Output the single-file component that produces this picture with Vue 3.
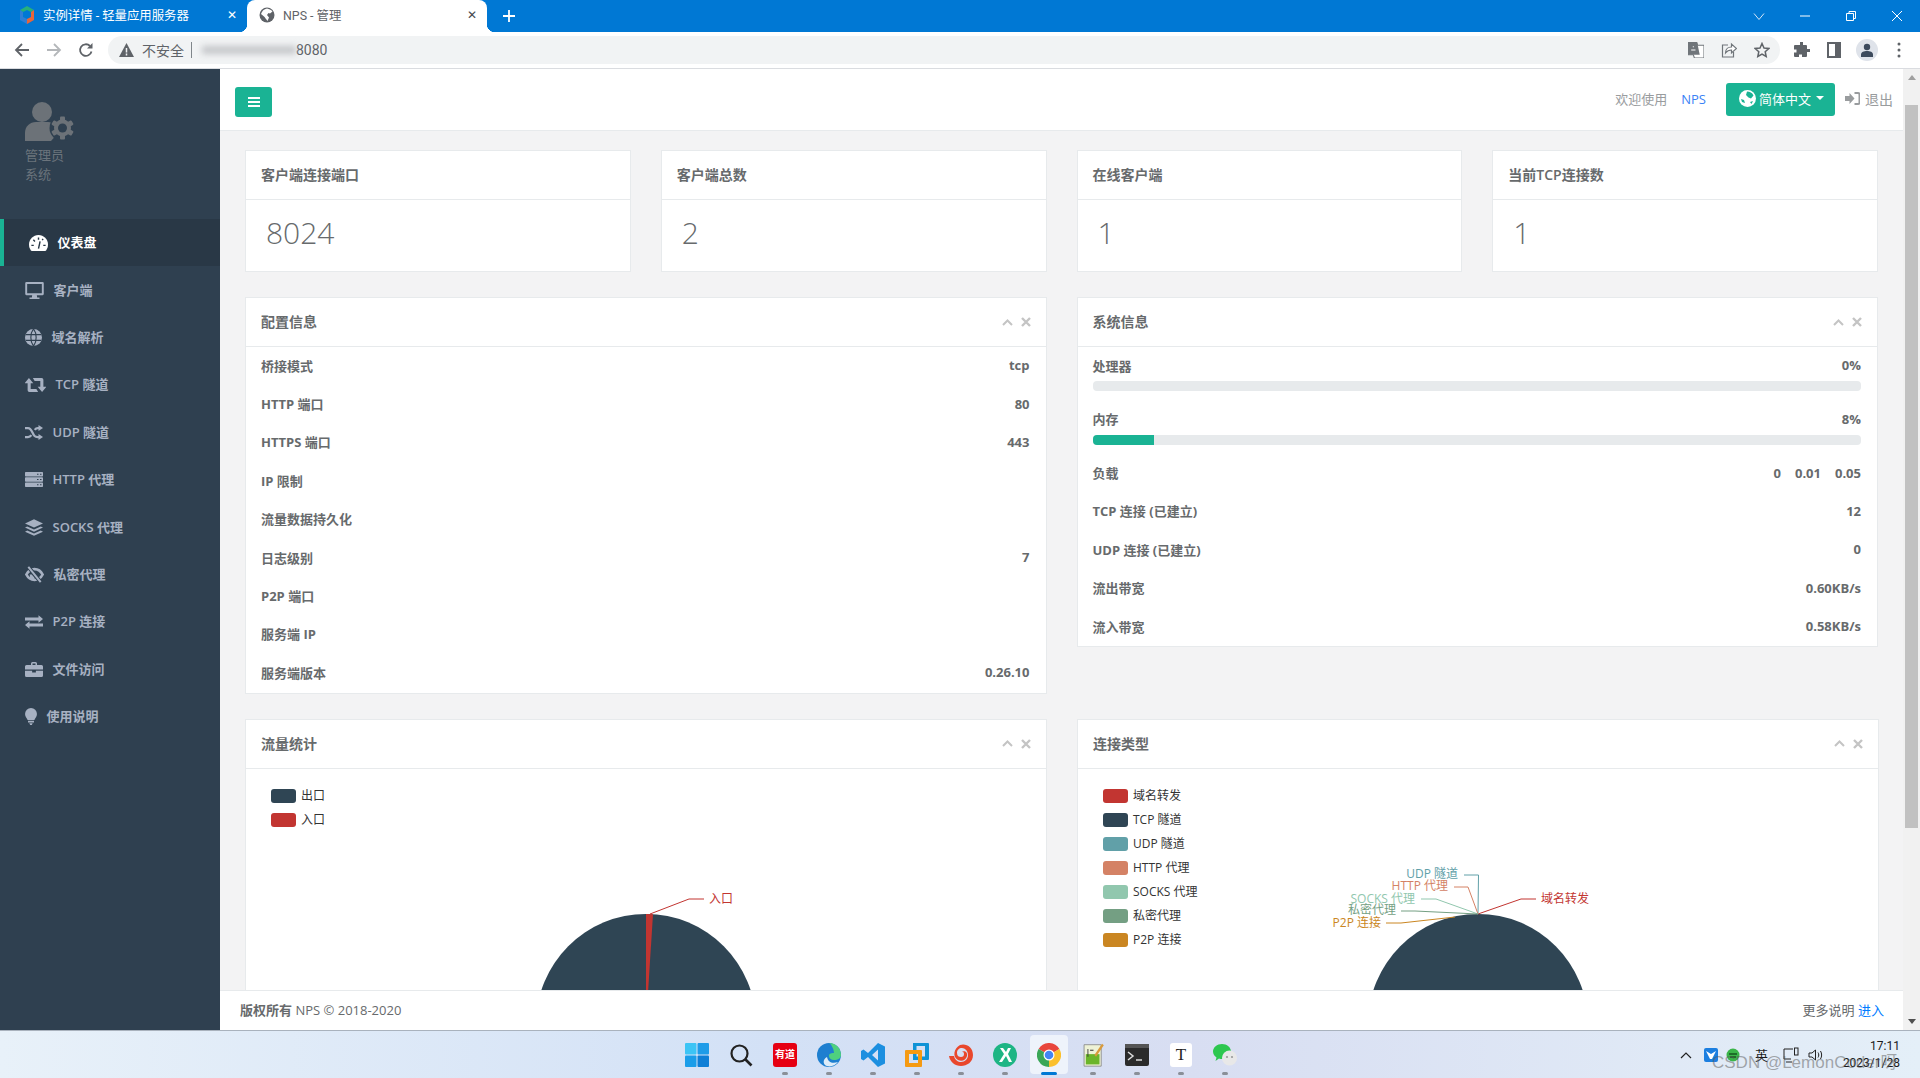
<template>
  <div class="screen">
    <!-- browser tabs -->
    <div class="tabstrip">
      <div class="tab">
        <svg class="fav" width="16" height="18" viewBox="0 0 16 18">
          <path d="M8 0l7 4-3 2-4-2-4 2-3-2z" fill="#27b07c" />
          <path d="M1 4l3 2v5l4 2v5l-7-4z" fill="#2f7fd6" />
          <path d="M15 4l-3 2v5l-4 2v5l7-4z" fill="#e8663a" />
        </svg>
        <span class="tab-title">实例详情 - 轻量应用服务器</span>
        <span class="tab-x">✕</span>
      </div>
      <div class="tab active">
        <svg class="fav" width="16" height="16" viewBox="0 0 16 16">
          <circle cx="8" cy="8" r="7.5" fill="#5f6368" />
          <path d="M8 1.5c2 .5 4 1 5.5 3L11 6.5 9.5 6 8 8l2 2.5L8.5 14C7 12 6 10.5 5 9.5L2 7c1-3 3-5 6-5.5z" fill="#fff" />
        </svg>
        <span class="tab-title">NPS - 管理</span>
        <span class="tab-x">✕</span>
      </div>
      <svg class="newtab" width="14" height="14" viewBox="0 0 14 14"><path d="M7 1v12M1 7h12" stroke="#fff" stroke-width="1.8" /></svg>
      <div class="winctl">
        <svg width="12" height="12" viewBox="0 0 12 12"><path d="M1 3.5l5 6 5-6" fill="none" stroke="#d5e6f7" /></svg>
        <svg width="12" height="12" viewBox="0 0 12 12"><path d="M1 6h10" stroke="#fff" /></svg>
        <svg width="12" height="12" viewBox="0 0 12 12"><path d="M1.5 3.5h7v7h-7zM4 3.5V1.5h6.5v7H8.5" fill="none" stroke="#fff" /></svg>
        <svg width="12" height="12" viewBox="0 0 12 12"><path d="M1 1l10 10M11 1L1 11" stroke="#fff" /></svg>
      </div>
    </div>

    <!-- address bar -->
    <div class="toolbar">
      <svg class="tb back" width="16" height="16" viewBox="0 0 16 16"><path d="M15 8H2M8 2L2 8l6 6" fill="none" stroke="#5f6368" stroke-width="1.8" /></svg>
      <svg class="tb fwd" width="16" height="16" viewBox="0 0 16 16"><path d="M1 8h13M8 2l6 6-6 6" fill="none" stroke="#b4b7ba" stroke-width="1.8" /></svg>
      <svg class="tb reload" width="16" height="16" viewBox="0 0 16 16">
        <path d="M13.5 9.5A5.8 5.8 0 1 1 12 4" fill="none" stroke="#5f6368" stroke-width="1.8" />
        <path d="M14.5 1v5.5H9z" fill="#5f6368" />
      </svg>
      <div class="omnibox">
        <svg width="15" height="14" viewBox="0 0 15 14"><path d="M7.5 0L15 14H0z" fill="#5f6368" /><path d="M7.5 5v4.5M7.5 10.5v2" stroke="#f1f3f4" stroke-width="1.5" /></svg>
        <span class="insecure">不安全</span>
        <i class="omni-div"></i>
        <span class="blurred"></span>
        <span class="port">8080</span>
        <div class="omni-right">
          <svg width="16" height="16" viewBox="0 0 15 15">
            <path d="M0 0h8l1 3H15v12H6l-1-3H0z" fill="#fff" stroke="#70757a" />
            <path d="M0 0h8.5l2.5 12H0z" fill="#70757a" />
            <path d="M3 7.5h4M5 4v1" stroke="#fff" fill="none" />
          </svg>
          <svg width="16" height="16" viewBox="0 0 16 16">
            <path d="M7 3H1.5v12h11V10" fill="none" stroke="#70757a" stroke-width="1.2" />
            <path d="M4.5 11c0-4 3-6 6-6V2l5 4.5-5 4.5V8c-3 0-4.500 1-6 3z" fill="#fff" stroke="#70757a" stroke-width="1.2" />
          </svg>
          <svg width="16" height="16" viewBox="0 0 16 16"><path d="M8 1.5l2 4.5 4.8.5-3.600 3.200 1 4.800L8 12.100l-4.200 2.400 1-4.800L1.200 6.500 6 6z" fill="none" stroke="#5f6368" stroke-width="1.5" /></svg>
        </div>
      </div>
      <div class="tool-right">
        <svg width="16" height="16" viewBox="0 0 16 16"><path d="M6 0h3v3h3a1 1 0 0 1 1 1v3h3v3h-3v4a1 1 0 0 1-1 1H8v-2.5H5V15H1a1 1 0 0 1-1-1v-3.500h2.500v-3H0V4a1 1 0 0 1 1-1h5z" fill="#5f6368" /></svg>
        <svg width="14" height="16" viewBox="0 0 14 16"><path fill-rule="evenodd" d="M0 0h14v16H0zM2 2v12h6V2z" fill="#5f6368" /></svg>
        <span class="avatar">
          <svg width="14" height="14" viewBox="0 0 14 14"><circle cx="7" cy="4" r="3.2" fill="#3c4a5c" /><path d="M1 14v-2.500C1 9 4 8 7 8s6 1 6 3.500V14z" fill="#3c4a5c" /></svg>
        </span>
        <svg width="4" height="16" viewBox="0 0 4 16"><circle cx="2" cy="2" r="1.500" fill="#5f6368" /><circle cx="2" cy="8" r="1.500" fill="#5f6368" /><circle cx="2" cy="14" r="1.500" fill="#5f6368" /></svg>
      </div>
    </div>

    <div class="page">
      <!-- sidebar -->
      <aside class="sidebar">
        <div class="profile">
          <svg class="profile-ico" width="49" height="39" viewBox="0 0 49 39">
            <circle cx="17" cy="10" r="10" fill="#6c7278" />
            <path d="M0 39v-8c0-7 5-11 11-11h12c5 0 10 4 11 10l-8 9z" fill="#6c7278" />
            <circle cx="37.5" cy="26" r="13" fill="#2f4050" />
            <g fill="#6c7278">
              <rect x="35" y="14.5" width="5" height="23" rx="1" />
              <rect x="35" y="14.5" width="5" height="23" rx="1" transform="rotate(60 37.5 26)" />
              <rect x="35" y="14.5" width="5" height="23" rx="1" transform="rotate(120 37.5 26)" />
            </g>
            <circle cx="37.5" cy="26" r="8.5" fill="#6c7278" />
            <circle cx="37.5" cy="26" r="4.5" fill="#2f4050" />
          </svg>
          <div class="profile-line">管理员</div>
          <div class="profile-line">系统</div>
        </div>
        <nav>
          <a v-for="item in navItems" :key="item.label" class="nav-item" :class="{ on: item.active }">
            <svg :width="item.w" :height="item.h" :viewBox="item.vb">
              <path
                v-for="(p, i) in item.paths"
                :key="i"
                :d="p.d"
                :fill="p.stroke ? 'none' : 'currentColor'"
                :stroke="p.stroke === 'cut' ? navCut(item) : p.stroke ? 'currentColor' : 'none'"
                :stroke-width="p.sw"
                fill-rule="evenodd"
              />
            </svg>
            <span>{{ item.label }}</span>
          </a>
        </nav>
      </aside>

      <div class="main">
        <header class="topbar">
          <button class="burger">
            <svg width="12" height="12" viewBox="0 0 12 12"><path d="M0 1h12v2H0zM0 5h12v2H0zM0 9h12v2H0z" fill="#fff" /></svg>
          </button>
          <span class="welcome">欢迎使用</span>
          <a class="nps">NPS</a>
          <button class="lang">
            <svg width="17" height="17" viewBox="0 0 17 17">
              <circle cx="8.5" cy="8.5" r="8.5" fill="#fff" />
              <path d="M8 1.5c3 0 5 1 6.5 4L12 8.5l-2.5-1L7 5zM11 12l3-1-1.5 3zM2 9l3 1 1 3-3-1z" fill="#1ab394" />
            </svg>
            <span>简体中文</span>
            <i class="caret"></i>
          </button>
          <a class="logout">
            <svg width="15" height="13" viewBox="0 0 15 13">
              <path d="M0 4h4.500V1l5 5.500-5 5.500V9H0z" fill="#999c9e" />
              <path d="M9.5 1H13a1.500 1.500 0 0 1 1.500 1.500v8A1.500 1.500 0 0 1 13 12H9.5" fill="none" stroke="#999c9e" stroke-width="2" />
            </svg>
            <span>退出</span>
          </a>
        </header>

        <div class="content">
          <div class="stats">
            <section v-for="s in stats" :key="s.title" class="box">
              <div class="box-head"><h5>{{ s.title }}</h5></div>
              <div class="stat-value">{{ s.value }}</div>
            </section>
          </div>

          <div class="cols">
            <section class="box">
              <div class="box-head">
                <h5>配置信息</h5>
                <div class="box-tools">
                  <svg width="11" height="7" viewBox="0 0 11 7"><path d="M1 6l4.500-4.500L10 6" fill="none" stroke="#c4c4c4" stroke-width="2" /></svg>
                  <svg width="10" height="10" viewBox="0 0 10 10"><path d="M1 1l8 8M9 1L1 9" stroke="#c4c4c4" stroke-width="2.4" /></svg>
                </div>
              </div>
              <div v-for="r in configRows" :key="r[0]" class="row">
                <span>{{ r[0] }}</span><span>{{ r[1] }}</span>
              </div>
            </section>

            <section class="box">
              <div class="box-head">
                <h5>系统信息</h5>
                <div class="box-tools">
                  <svg width="11" height="7" viewBox="0 0 11 7"><path d="M1 6l4.500-4.500L10 6" fill="none" stroke="#c4c4c4" stroke-width="2" /></svg>
                  <svg width="10" height="10" viewBox="0 0 10 10"><path d="M1 1l8 8M9 1L1 9" stroke="#c4c4c4" stroke-width="2.4" /></svg>
                </div>
              </div>
              <div v-for="b in sysBars" :key="b.label" class="bar-row">
                <div class="row"><span>{{ b.label }}</span><span>{{ b.pct }}%</span></div>
                <div class="track"><div class="fill" :style="{ width: b.pct + '%' }"></div></div>
              </div>
              <div class="row">
                <span>负载</span>
                <span class="load"><span>0</span><span>0.01</span><span>0.05</span></span>
              </div>
              <div v-for="r in sysRows" :key="r[0]" class="row">
                <span>{{ r[0] }}</span><span>{{ r[1] }}</span>
              </div>
            </section>
          </div>

          <div class="cols">
            <section v-for="c in charts" :key="c.title" class="box">
              <div class="box-head">
                <h5>{{ c.title }}</h5>
                <div class="box-tools">
                  <svg width="11" height="7" viewBox="0 0 11 7"><path d="M1 6l4.500-4.500L10 6" fill="none" stroke="#c4c4c4" stroke-width="2" /></svg>
                  <svg width="10" height="10" viewBox="0 0 10 10"><path d="M1 1l8 8M9 1L1 9" stroke="#c4c4c4" stroke-width="2.4" /></svg>
                </div>
              </div>
              <svg class="chart" width="800" height="400" viewBox="0 0 800 400">
                <g v-for="(l, i) in c.legend" :key="l.name">
                  <rect x="25" :y="20 + i * 24" width="25" height="14" rx="3" :fill="l.color" />
                  <text x="55" :y="31 + i * 24" class="legend-txt">{{ l.name }}</text>
                </g>
                <circle cx="400" cy="255" r="110" fill="#2f4554" />
                <path v-if="c.slice" d="M400 255V145A110 110 0 0 1 407 145.2z" fill="#c23531" />
                <g v-for="l in c.labels" :key="l.name">
                  <polyline :points="l.line" fill="none" :stroke="l.color" />
                  <text :x="l.x" :y="l.y" :text-anchor="l.anchor" :fill="l.color" class="pie-txt">{{ l.name }}</text>
                </g>
              </svg>
            </section>
          </div>
        </div>

        <footer class="footer">
          <div><strong>版权所有</strong> NPS © 2018-2020</div>
          <div>更多说明 <a>进入</a></div>
        </footer>
      </div>

      <div class="scrollbar">
        <i class="sb-up"></i>
        <div class="sb-thumb"></div>
        <i class="sb-down"></i>
      </div>
    </div>

    <!-- windows taskbar -->
    <div class="taskbar">
      <div class="task-icons">
        <span class="task-ico">
          <svg width="24" height="24" viewBox="0 0 24 24">
            <rect x="0" y="0" width="11.5" height="11.5" rx="1" fill="#3cc4f5" />
            <rect x="12.5" y="0" width="11.5" height="11.5" rx="1" fill="#1f9ce8" />
            <rect x="0" y="12.5" width="11.5" height="11.5" rx="1" fill="#1a9de9" />
            <rect x="12.5" y="12.5" width="11.5" height="11.5" rx="1" fill="#0f7fd6" />
          </svg>
        </span>
        <span class="task-ico">
          <svg width="24" height="24" viewBox="0 0 24 24"><circle cx="10.5" cy="10.5" r="8" fill="none" stroke="#222" stroke-width="2.2" /><path d="M16 16l6.500 6.500" stroke="#222" stroke-width="2.6" /></svg>
        </span>
        <span class="task-ico dot">
          <span class="youdao">有道</span>
        </span>
        <span class="task-ico dot">
          <svg width="24" height="24" viewBox="0 0 24 24">
            <circle cx="12" cy="12" r="12" fill="#1e7fd0" />
            <path d="M12 0c7 0 12 5 12 12 0 3-3 5-7 5-3 0-5-2-5-4 0-3 3-3 5-3 0-5-4-10-5-10z" fill="#4fd07e" />
            <path d="M10 14c1 5 5 7 11 5-3 4-9 6-13 3-2-2-2-6 2-8z" fill="#fff" opacity=".85" />
          </svg>
        </span>
        <span class="task-ico dot">
          <svg width="24" height="24" viewBox="0 0 24 24">
            <path d="M17 0l7 3.500v17L17 24 7 14l-4.500 3.500L0 16V8l2.500-1.500L7 10zM17 6.500L11 12l6 5.500z" fill="#1c8fe0" fill-rule="evenodd" />
          </svg>
        </span>
        <span class="task-ico dot">
          <svg width="24" height="24" viewBox="0 0 24 24">
            <path d="M8 0h15a1 1 0 0 1 1 1v15a1 1 0 0 1-1 1H8zm3.500 3v10.500H20V3z" fill="#0f93d6" fill-rule="evenodd" />
            <path d="M1 7h15a1 1 0 0 1 1 1v15a1 1 0 0 1-1 1H1a1 1 0 0 1-1-1V8a1 1 0 0 1 1-1zm3 4v9h9v-9z" fill="#f59a12" fill-rule="evenodd" />
          </svg>
        </span>
        <span class="task-ico dot">
          <svg width="24" height="24" viewBox="0 0 24 24">
            <path d="M0 13h5c1 4 4 6 7 6 4 0 7-3 7-7s-3-7-6-7-5 2-5 5 2 4 4 4 3-1 3-3-1-2-2-2c2-2 6 0 5 4s-5 6-9 4C3 14 5 5 11 2c6-2 13 2 13 10 0 7-6 11-12 11C6 23 1 19 0 13z" fill="#e9472c" />
          </svg>
        </span>
        <span class="task-ico dot">
          <svg width="24" height="24" viewBox="0 0 24 24">
            <circle cx="12" cy="12" r="12" fill="#1db584" />
            <path d="M7 5l4 6-5 8h3l4-6 3 6h3l-4-8 3-6h-3l-2 4-3-4z" fill="#fff" />
          </svg>
        </span>
        <span class="task-ico chrome">
          <svg width="24" height="24" viewBox="0 0 24 24">
            <path d="M12 12L1.600 6A12 12 0 0 1 22.400 6z" fill="#e8453c" />
            <path d="M12 12l10.400-6A12 12 0 0 1 12 24z" fill="#fbc02d" />
            <path d="M12 12L12 24A12 12 0 0 1 1.600 6z" fill="#3aa757" />
            <circle cx="12" cy="12" r="5.5" fill="#fff" /><circle cx="12" cy="12" r="4.3" fill="#4285f4" />
          </svg>
        </span>
        <span class="task-ico dot">
          <svg width="21" height="24" viewBox="0 0 24 28">
            <path d="M1 2h20v25H1z" fill="#eef2d6" stroke="#888" />
            <path d="M3 13h16v12H3z" fill="#6bb52a" />
            <path d="M5 7h1v9H5zM8 8h4v1H8z" fill="#333" />
            <path d="M13 14L22 1l2 1.500L15 16z" fill="#d99a3c" />
          </svg>
        </span>
        <span class="task-ico dot">
          <svg width="24" height="22" viewBox="0 0 24 22">
            <rect width="24" height="22" rx="2" fill="#2b2b2b" /><rect width="24" height="4" fill="#555" />
            <path d="M3 8l5 4-5 4" fill="none" stroke="#ddd" stroke-width="1.5" /><path d="M11 16h6" stroke="#ddd" stroke-width="1.5" />
          </svg>
        </span>
        <span class="task-ico dot"><span class="t-ico">T</span></span>
        <span class="task-ico dot">
          <svg width="24" height="22" viewBox="0 0 24 22">
            <path d="M9 0c5 0 9 3.500 9 7.500S14 15 9 15c-1 0-2 0-3-.5L2.500 17l1-3.500C1.500 12 0 10 0 7.500 0 3.500 4 0 9 0z" fill="#2dc74f" />
            <circle cx="16.5" cy="14" r="7.5" fill="#e8e8e8" />
            <circle cx="14" cy="13" r="1.1" fill="#999" /><circle cx="19" cy="13" r="1.1" fill="#999" />
          </svg>
        </span>
      </div>
      <div class="tray">
        <svg class="tray-chev" width="12" height="8" viewBox="0 0 12 8"><path d="M1 7l5-5 5 5" fill="none" stroke="#222" stroke-width="1.2" /></svg>
        <svg class="tray-a" width="14" height="14" viewBox="0 0 14 14"><rect width="14" height="14" rx="2" fill="#1c7fe0" /><path d="M2 3l5 3 5-3-4 8H6z" fill="#fff" /></svg>
        <svg class="tray-b" width="14" height="14" viewBox="0 0 14 14"><circle cx="7" cy="7" r="6.5" fill="#3bb54a" /><path d="M3 6h8M4 9h6" stroke="#14571f" stroke-width="1.3" /></svg>
        <span class="tray-ime">英</span>
        <svg class="tray-c" width="16" height="16" viewBox="0 0 16 16"><path d="M8 12H1V2h9M3 15h6" fill="none" stroke="#222" /><rect x="11.5" y="1" width="3.5" height="7" fill="none" stroke="#222" /></svg>
        <svg class="tray-d" width="16" height="16" viewBox="0 0 16 16"><path d="M1 6h3l3.500-3v10L4 10H1z" fill="none" stroke="#222" /><path d="M10 5.500c1 1.500 1 3.500 0 5M12.500 4c1.500 2.500 1.500 5.500 0 8" fill="none" stroke="#222" /></svg>
        <div class="clock"><div>17:11</div><div>2023/1/28</div></div>
      </div>
      <span class="watermark">CSDN @LemonCoder呀</span>
    </div>
  </div>
</template>

<script setup>
const navItems = [
  {
    label: "仪表盘", active: true, w: 19, h: 16, vb: "0 0 24 20",
    paths: [
      { d: "M12 0C5.400 0 0 5.400 0 12c0 2.800.9 5.400 2.400 7.400.3.400.7.600 1.200.600h16.800c.5 0 .9-.2 1.200-.6C23.100 17.400 24 14.800 24 12c0-6.600-5.400-12-12-12z" },
      { d: "M12 3v3M5.500 6l2 2M3 13h3M18 13h3M12 17l2-9M16.500 6l1.500-1", stroke: "cut", sw: 1.8 },
    ],
  },
  {
    label: "客户端", w: 19, h: 17, vb: "0 0 24 22",
    paths: [{ d: "M1.500 0h21A1.500 1.500 0 0 1 24 1.500v14a1.500 1.500 0 0 1-1.500 1.500H15l.5 3h3v2h-13v-2h3l.5-3H1.500A1.500 1.500 0 0 1 0 15.500v-14A1.500 1.500 0 0 1 1.500 0zM2.500 2.500v12h19v-12z" }],
  },
  {
    label: "域名解析", w: 17, h: 17, vb: "0 0 24 24",
    paths: [
      { d: "M12 0a12 12 0 1 0 0 24a12 12 0 1 0 0-24z" },
      { d: "M1 8h22M1 16h22M12 0c-5 6-5 18 0 24M12 0c5 6 5 18 0 24", stroke: "cut", sw: 1.6 },
    ],
  },
  {
    label: "TCP 隧道", w: 21, h: 14, vb: "0 0 24 16",
    paths: [
      { d: "M4.500 0L9.500 6H6.500v6.500H13L15 16H5a2 2 0 0 1-2-2V6H-.5z" },
      { d: "M19.500 16L14.500 10h3V3.500H11L9 0h10a2 2 0 0 1 2 2v8h3.500z" },
    ],
  },
  {
    label: "UDP 隧道", w: 18, h: 15, vb: "0 0 24 20",
    paths: [
      { d: "M0 4h4c3 0 4 1.500 6 6s3 6 7 6h2M0 16h4c2 0 3.500-1 4.500-2.500M13 6.500C14 5 15 4 17 4h2", stroke: "line", sw: 3 },
      { d: "M18 0l6 4-6 4z" },
      { d: "M18 12l6 4-6 4z" },
    ],
  },
  {
    label: "HTTP 代理", w: 18, h: 15, vb: "0 0 24 20",
    paths: [
      { d: "M1 0h22a1 1 0 0 1 1 1v4a1 1 0 0 1-1 1H1a1 1 0 0 1-1-1V1a1 1 0 0 1 1-1zM1 7h22a1 1 0 0 1 1 1v4a1 1 0 0 1-1 1H1a1 1 0 0 1-1-1V8a1 1 0 0 1 1-1zM1 14h22a1 1 0 0 1 1 1v4a1 1 0 0 1-1 1H1a1 1 0 0 1-1-1v-4a1 1 0 0 1 1-1z" },
      { d: "M16 3h2M20 3h2M16 10h2M20 10h2M16 17h2M20 17h2", stroke: "cut", sw: 1.4 },
    ],
  },
  {
    label: "SOCKS 代理", w: 18, h: 17, vb: "0 0 24 22",
    paths: [
      { d: "M12 0l12 5.500L12 11 0 5.500z" },
      { d: "M3 9.500l9 4 9-4 3 1.500-12 5.500L0 11z" },
      { d: "M3 15l9 4 9-4 3 1.500L12 22 0 16.500z" },
    ],
  },
  {
    label: "私密代理", w: 19, h: 17, vb: "0 0 24 22",
    paths: [
      { d: "M1.500 11C4 6 8 4 12 4s8 2 10.500 7c-2.500 5-6.500 7-10.500 7s-8-2-10.500-7zM7.500 11c0 3 2 4.500 4.500 4.500", stroke: "line", sw: 3.4 },
      { d: "M4 1l16 20", stroke: "cut", sw: 5 },
      { d: "M4 1l16 20", stroke: "line", sw: 2.6 },
    ],
  },
  {
    label: "P2P 连接", w: 18, h: 14, vb: "0 0 24 18",
    paths: [
      { d: "M18 0l6 5-6 5V7H0V3h18z" },
      { d: "M6 8l-6 5 6 5v-3h18v-4H6z" },
    ],
  },
  {
    label: "文件访问", w: 18, h: 15, vb: "0 0 24 20",
    paths: [
      { d: "M8 4V2a2 2 0 0 1 2-2h4a2 2 0 0 1 2 2v2h6a2 2 0 0 1 2 2v4H0V6a2 2 0 0 1 2-2zm2 0h4V2h-4z" },
      { d: "M0 11.500h9.500V14h5v-2.500H24V18a2 2 0 0 1-2 2H2a2 2 0 0 1-2-2z" },
    ],
  },
  {
    label: "使用说明", w: 12, h: 17, vb: "0 0 14 20",
    paths: [{ d: "M7 0a7 7 0 0 1 7 7c0 3-2 4.500-3 7H3C2 11.500 0 10 0 7a7 7 0 0 1 7-7zM3.500 15h7v2h-7zM5 18h4l-1 2H6z" }],
  },
];

// cut-out lines take the colour of the row behind the icon
function navCut(item) {
  return item.active ? "#293846" : "#2f4050";
}

const stats = [
  { title: "客户端连接端口", value: "8024" },
  { title: "客户端总数", value: "2" },
  { title: "在线客户端", value: "1" },
  { title: "当前TCP连接数", value: "1" },
];

const configRows = [
  ["桥接模式", "tcp"],
  ["HTTP 端口", "80"],
  ["HTTPS 端口", "443"],
  ["IP 限制", ""],
  ["流量数据持久化", ""],
  ["日志级别", "7"],
  ["P2P 端口", ""],
  ["服务端 IP", ""],
  ["服务端版本", "0.26.10"],
];

const sysBars = [
  { label: "处理器", pct: 0 },
  { label: "内存", pct: 8 },
];

const sysRows = [
  ["TCP 连接 (已建立)", "12"],
  ["UDP 连接 (已建立)", "0"],
  ["流出带宽", "0.60KB/s"],
  ["流入带宽", "0.58KB/s"],
];

const charts = [
  {
    title: "流量统计",
    slice: true,
    legend: [
      { name: "出口", color: "#2f4554" },
      { name: "入口", color: "#c23531" },
    ],
    labels: [
      { name: "入口", color: "#c23531", line: "404,145 443,130 458,130", x: 463, y: 134, anchor: "start" },
    ],
  },
  {
    title: "连接类型",
    legend: [
      { name: "域名转发", color: "#c23531" },
      { name: "TCP 隧道", color: "#2f4554" },
      { name: "UDP 隧道", color: "#61a0a8" },
      { name: "HTTP 代理", color: "#d48265" },
      { name: "SOCKS 代理", color: "#91c7ae" },
      { name: "私密代理", color: "#749f83" },
      { name: "P2P 连接", color: "#ca8622" },
    ],
    labels: [
      { name: "域名转发", color: "#c23531", line: "400,145 443,130 458,130", x: 463, y: 134, anchor: "start" },
      { name: "UDP 隧道", color: "#61a0a8", line: "400,145 400.5,106 386,106", x: 380, y: 109, anchor: "end" },
      { name: "HTTP 代理", color: "#d48265", line: "400,145 390,118 376,118", x: 370, y: 121, anchor: "end" },
      { name: "SOCKS 代理", color: "#91c7ae", line: "400,145 358,130 343,130", x: 337, y: 134, anchor: "end" },
      { name: "私密代理", color: "#749f83", line: "400,145 337,142 323,142", x: 318, y: 145, anchor: "end" },
      { name: "P2P 连接", color: "#ca8622", line: "377,148 323,154 308,154", x: 303, y: 158, anchor: "end" },
    ],
  },
];
</script>

<style>
html,
body {
  margin: 0;
  overflow: hidden;
}
</style>

<style scoped>
* {
  box-sizing: border-box;
}

.screen {
  width: 1920px;
  height: 1078px;
  display: flex;
  flex-direction: column;
  overflow: hidden;
  position: relative;
  font-family: "Open Sans", "Noto Sans CJK SC", sans-serif;
  font-size: 13px;
  color: #676a6c;
}

.tabstrip {
  height: 32px;
  flex: none;
  background: #0078d4;
  display: flex;
  align-items: stretch;
  font-family: Roboto, "Noto Sans CJK SC", sans-serif;
  font-size: 12.4px;
}

.tab {
  width: 247px;
  display: flex;
  align-items: center;
  padding: 0 0 3px 19px;
  color: #fff;
  position: relative;
}

.tab.active {
  width: 240px;
  background: #fff;
  color: #5f6368;
  border-radius: 8px 8px 0 0;
  padding-left: 12px;
}

.tab.active::before,
.tab.active::after {
  content: "";
  position: absolute;
  bottom: 0;
  width: 8px;
  height: 8px;
}

.tab.active::before {
  left: -8px;
  background: radial-gradient(circle at 0 0, #0078d4 8px, #fff 8.5px);
}

.tab.active::after {
  right: -8px;
  background: radial-gradient(circle at 100% 0, #0078d4 8px, #fff 8.5px);
}

.fav {
  flex: none;
  margin-right: 8px;
}

.tab-title {
  flex: 1;
  white-space: nowrap;
}

.tab-x {
  width: 12px;
  font-size: 12px;
  margin-right: 9px;
  text-align: center;
}

.tab.active .tab-x {
  color: #45494d;
}

.newtab {
  align-self: center;
  margin-left: 15px;
}

.winctl {
  margin-left: auto;
  display: flex;
  align-items: center;
  gap: 34px;
  padding-right: 17px;
}

.toolbar {
  height: 37px;
  flex: none;
  background: #fff;
  border-bottom: 1px solid #dadce0;
  display: flex;
  align-items: center;
}

.tb {
  flex: none;
  margin-left: 16px;
}

.tb.back {
  margin-left: 14px;
}

.omnibox {
  width: 1672px;
  height: 28px;
  margin-left: 14px;
  border-radius: 14px;
  background: #f1f3f4;
  display: flex;
  align-items: center;
  padding: 0 0 0 11px;
  font-family: Roboto, "Noto Sans CJK SC", sans-serif;
  font-size: 14px;
  color: #5f6368;
}

.insecure {
  margin: 0 0 1px 8px;
}

.omni-div {
  width: 1px;
  height: 16px;
  background: #80868b;
  margin: 0 10px 0 7px;
}

.blurred {
  width: 94px;
  height: 8px;
  background: #c4c6c9;
  filter: blur(3px);
}

.port {
  color: #5f6368;
  margin-bottom: 1px;
}

.omni-right {
  margin-left: auto;
  display: flex;
  align-items: center;
  gap: 17px;
  padding-right: 10px;
}

.tool-right {
  display: flex;
  align-items: center;
  margin-left: 14px;
  gap: 17px;
}

.avatar {
  width: 22px;
  height: 22px;
  margin: 0 2px 0 -2px;
  border-radius: 50%;
  background: #dfe3ea;
  display: flex;
  align-items: center;
  justify-content: center;
}

.page {
  flex: 1;
  min-height: 0;
  display: flex;
}

.sidebar {
  width: 220px;
  flex: none;
  background: #2f4050;
}

.profile {
  height: 150px;
  padding: 33px 0 0 25px;
  color: #6b747c;
}

.profile-ico {
  display: block;
  margin-bottom: 5px;
}

.profile-line {
  line-height: 19px;
}

.nav-item {
  height: 47.4px;
  display: flex;
  align-items: center;
  gap: 9.5px;
  padding: 0 0 2px 25px;
  color: #a7b1c2;
  font-weight: 600;
}

.nav-item svg {
  flex: none;
  margin-top: 2px;
}

.nav-item.on {
  background: #293846;
  border-left: 4px solid #1ab394;
  color: #fff;
}

.main {
  flex: 1;
  min-width: 0;
  display: flex;
  flex-direction: column;
  background: #f3f3f4;
}

.topbar {
  height: 62px;
  flex: none;
  background: #fff;
  border-bottom: 1px solid #e7eaec;
  display: flex;
  align-items: center;
  padding: 0 10px 0 15px;
  color: #999c9e;
}

.burger {
  width: 37px;
  height: 30px;
  margin: 5px auto 0 0;
  padding: 0;
  border: 0;
  border-radius: 3px;
  background: #1ab394;
  display: flex;
  align-items: center;
  justify-content: center;
}

.welcome {
  margin-bottom: 2px;
}

.nps {
  margin: 0 20px 2px 14px;
  color: #3b82f6;
}

.lang {
  width: 109px;
  height: 33px;
  border: 0;
  border-radius: 3px;
  background: #1ab394;
  color: #fff;
  font: inherit;
  display: flex;
  align-items: center;
  padding: 0 0 3px 13px;
  gap: 3px;
}

.caret {
  width: 0;
  height: 0;
  margin-left: 2px;
  border-style: solid;
  border-width: 4px 4px 0;
  border-color: #fff transparent transparent;
}

.logout {
  display: flex;
  align-items: center;
  gap: 5px;
  margin: 0 0 2px 10px;
  font-size: 14px;
}

.content {
  flex: 1;
  min-height: 0;
  overflow: hidden;
  padding: 19px 25px 0;
  display: flex;
  flex-direction: column;
  gap: 25px;
}

.stats {
  display: grid;
  grid-template-columns: repeat(4, 1fr);
  gap: 30px;
  flex: none;
}

.cols {
  display: grid;
  grid-template-columns: repeat(2, 1fr);
  gap: 30px;
  align-items: start;
  flex: none;
}

.box {
  background: #fff;
  border: 1px solid #e7eaec;
}

.box-head {
  height: 49px;
  border-bottom: 1px solid #e7eaec;
  display: flex;
  align-items: center;
  justify-content: space-between;
  padding: 0 15px 2px;
}

h5 {
  margin: 0;
  font-size: 14px;
  font-weight: 600;
}

.box-tools {
  display: flex;
  align-items: center;
  gap: 8px;
  margin-top: 2px;
}

.stat-value {
  height: 71px;
  padding: 15px 0 0 20px;
  font-size: 30px;
  font-weight: 300;
  line-height: 36px;
}

.row {
  height: 38.4px;
  display: flex;
  align-items: center;
  justify-content: space-between;
  padding: 0 16px 2px 15px;
  font-weight: 700;
}

.bar-row {
  height: 53.7px;
}

.track {
  height: 10px;
  margin: -4px 16px 0 15px;
  border-radius: 4px;
  background: #e7eaec;
  overflow: hidden;
}

.fill {
  height: 100%;
  background: #1ab394;
}

.load {
  display: flex;
  gap: 14px;
}

.chart {
  display: block;
}

.legend-txt {
  font-size: 12px;
  fill: #333;
}

.pie-txt {
  font-size: 12px;
}

.footer {
  height: 40px;
  flex: none;
  background: #fff;
  border-top: 1px solid #e7eaec;
  display: flex;
  align-items: center;
  justify-content: space-between;
  padding: 0 19px 2px 20px;
}

.footer strong {
  font-weight: 600;
}

.footer a {
  color: #007bff;
}

.scrollbar {
  width: 17px;
  flex: none;
  background: #f1f1f1;
  display: flex;
  flex-direction: column;
  align-items: center;
  position: relative;
}

.sb-thumb {
  width: 13px;
  height: 723px;
  margin-top: 36px;
  background: #c1c1c1;
}

.sb-up,
.sb-down {
  position: absolute;
  width: 0;
  height: 0;
  border-style: solid;
}

.sb-up {
  top: 6px;
  border-width: 0 4px 5px;
  border-color: transparent transparent #a0a0a0;
}

.sb-down {
  bottom: 6px;
  border-width: 5px 4px 0;
  border-color: #505050 transparent transparent;
}

.taskbar {
  height: 48px;
  flex: none;
  position: relative;
  border-top: 1px solid #a9b2bd;
  background: linear-gradient(90deg, #e8f1f9, #d3e1f6 40%, #d8def2 62%, #e4eff8);
  font-family: Roboto, "Noto Sans CJK SC", sans-serif;
  color: #1a1a1a;
}

.task-icons {
  position: absolute;
  left: 675px;
  top: 4px;
  display: flex;
}

.task-ico {
  width: 44px;
  height: 39px;
  display: flex;
  align-items: center;
  justify-content: center;
  position: relative;
}

.task-ico.dot::after,
.task-ico.chrome::after {
  content: "";
  position: absolute;
  bottom: -1px;
  left: 19px;
  width: 6px;
  height: 3px;
  border-radius: 2px;
  background: #8a8f98;
}

.task-ico.chrome {
  background: #eef3fb;
  border-radius: 4px;
  width: 38px;
  margin: 0 3px;
}

.task-ico.chrome::after {
  left: 11px;
  width: 16px;
  background: #0078d4;
}

.youdao {
  width: 24px;
  height: 24px;
  border-radius: 3px;
  background: #e60012;
  color: #fff;
  font-size: 10px;
  font-weight: 700;
  line-height: 24px;
  text-align: center;
  white-space: nowrap;
}

.t-ico {
  width: 22px;
  height: 24px;
  border-radius: 3px;
  background: #fff;
  font-family: "Liberation Serif", serif;
  font-size: 17px;
  line-height: 24px;
  text-align: center;
  color: #222;
}

.tray {
  position: absolute;
  left: 1680px;
  right: 20px;
  top: 0;
  bottom: 0;
  display: flex;
  align-items: center;
}

.tray-a {
  margin-left: 12px;
}

.tray-b {
  margin-left: 8px;
}

.tray-ime {
  margin-left: 15px;
  font-size: 13px;
}

.tray-c {
  margin-left: 15px;
}

.tray-d {
  margin-left: 9px;
}

.clock {
  margin-left: auto;
  text-align: right;
  font-size: 12px;
  line-height: 17px;
}

.watermark {
  position: absolute;
  left: 1712px;
  top: 17px;
  font-family: "Liberation Sans", "Noto Sans CJK SC", sans-serif;
  font-size: 17px;
  white-space: nowrap;
  color: rgba(90, 90, 90, 0.5);
}
</style>
